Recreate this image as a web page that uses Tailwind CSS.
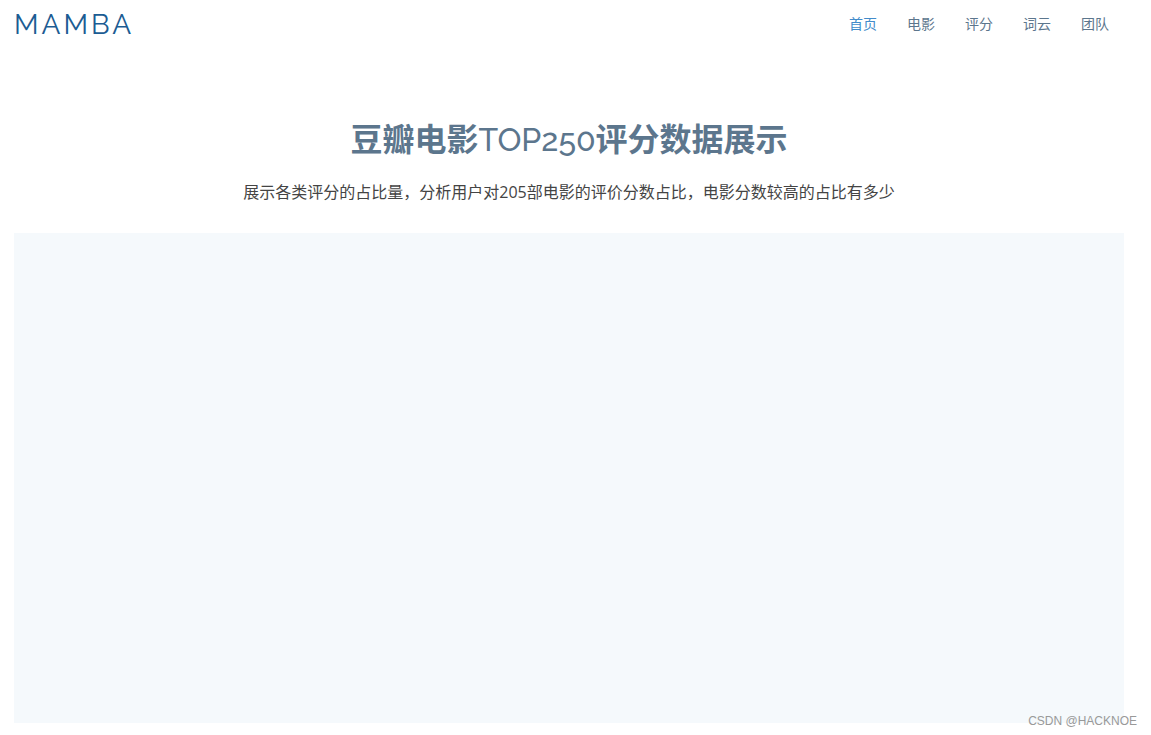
<!DOCTYPE html>
<html lang="zh-CN">

<head>
    <meta charset="UTF-8" />
    <meta name="viewport" content="width=device-width, initial-scale=1.0" />
    <title>豆瓣电影TOP250评分数据展示</title>
    <script src="https://cdn.jsdelivr.net/npm/@tailwindcss/browser@4"></script>
</head>

<body class="min-h-screen flex flex-col bg-white text-[#444444] font-['Open_Sans','Noto_Sans_CJK_SC',sans-serif]">

    <header class="flex items-center justify-between h-12 pl-[14px] pr-[42px]">
        <a href="#" class="pt-[2px] text-[28px] leading-8 tracking-[3px] text-[#1c5c93] font-['Raleway','Lato',sans-serif]">MAMBA</a>
        <nav>
            <ul class="flex gap-[30px] text-sm">
                <li><a href="#" class="text-[#428bca]">首页</a></li>
                <li><a href="#" class="text-[#5c768d]">电影</a></li>
                <li><a href="#" class="text-[#5c768d]">评分</a></li>
                <li><a href="#" class="text-[#5c768d]">词云</a></li>
                <li><a href="#" class="text-[#5c768d]">团队</a></li>
            </ul>
        </nav>
    </header>

    <main class="flex-1 flex flex-col pt-[71px] pb-3 pl-[14px] pr-[27px]">
        <div class="text-center">
            <h2 class="text-[32px] leading-10 font-bold text-[#5c768d]">豆瓣电影<span class="font-medium font-['Raleway','Lato',sans-serif]">TOP250</span>评分数据展示</h2>
            <p class="mt-5 text-base">展示各类评分的占比量，分析用户对205部电影的评价分数占比，电影分数较高的占比有多少</p>
        </div>
        <!-- 图表区域 -->
        <div id="chart" class="mt-[29px] flex-1 bg-[#f5f9fc]"></div>
    </main>

    <div class="absolute right-[14px] bottom-[6px] text-xs text-[#999999] font-['Liberation_Sans',sans-serif]">CSDN @HACKNOE</div>

</body>

</html>
